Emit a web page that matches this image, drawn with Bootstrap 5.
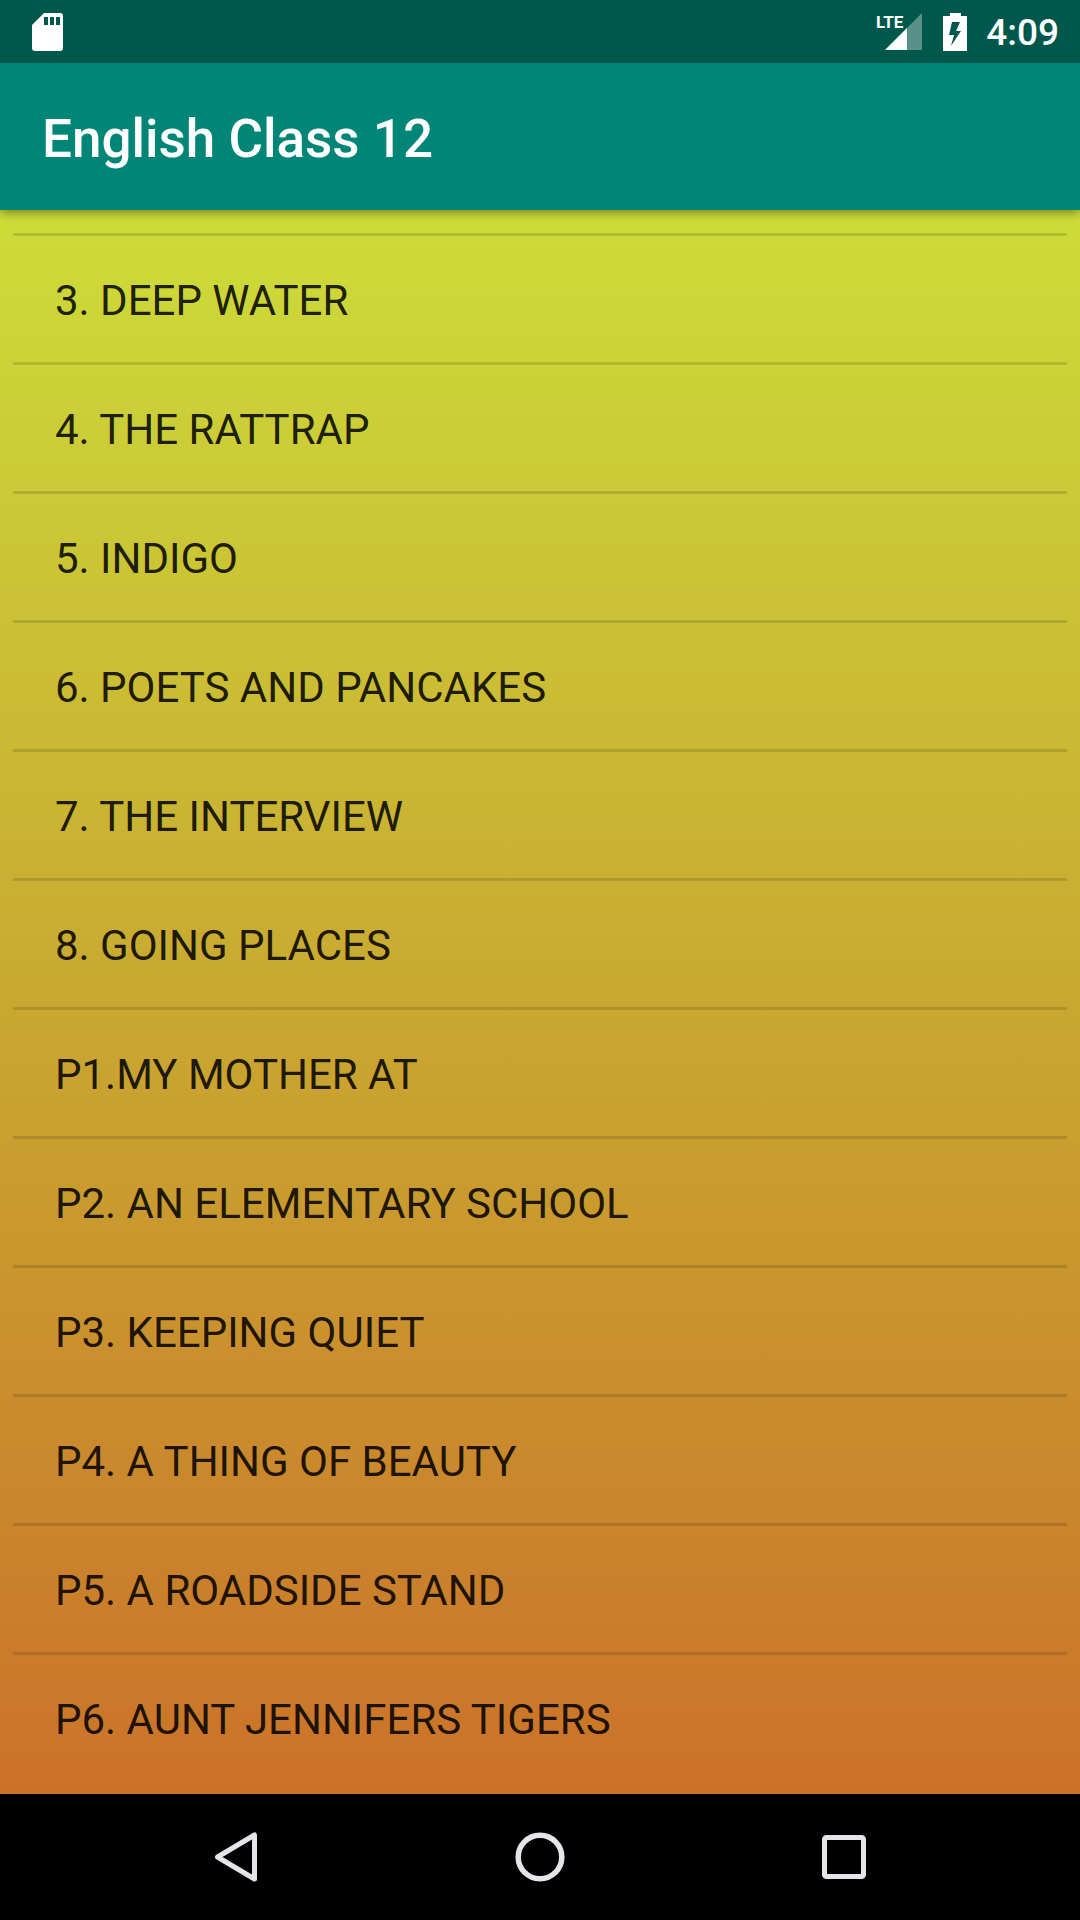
<!DOCTYPE html>
<html lang="en">
<head>
<meta charset="utf-8">
<meta name="viewport" content="width=device-width, initial-scale=1">
<title>English Class 12</title>
<link href="https://cdn.jsdelivr.net/npm/bootstrap@5.3.0/dist/css/bootstrap.min.css" rel="stylesheet">
<style>
  body { font-family: Roboto, "Noto Sans", sans-serif; background: #000; }
  .status-bar { background: #00574b; height: 63px; padding: 0 21px 0 32px; color: #fff; z-index: 2; }
  .network { height: 38px; width: 46px; }
  .network text { font: 700 17px "Liberation Sans Narrow", Roboto, sans-serif; }
  .charge { margin: 0 19px 0 21px; }
  .clock { font-size: 37px; line-height: 44px; font-weight: 500; padding-top: 2px; }
  .app-bar { background: #008577; height: 147px; padding: 4px 42px 0; box-shadow: 0 2px 10px rgba(0,0,0,.45); z-index: 1; }
  .app-title { font-size: 53px; line-height: 60px; font-weight: 500; color: #fff; }
  .chapters { background: linear-gradient(#cddc39, #c9a831 50%, #cb7229); padding: 23px 13px 13px; }
  .chapters .list-group-item { background: transparent; border: 0; border-top: 3px solid rgba(0,0,0,.13); border-radius: 0;
    padding: 40px 42px 36px; font-size: 42px; line-height: 50px; color: rgba(0,0,0,.87); }
  .nav-keys { height: 126px; padding: 0 148px; background: #000; }
  .nav-keys .btn { width: 176px; height: 126px; }
</style>
</head>
<body class="min-vh-100 d-flex flex-column">
<header class="status-bar position-relative d-flex align-items-center justify-content-between">
  <svg width="31" height="38" viewBox="0 0 31 38" aria-label="SD card"><path fill="#fff" fill-rule="evenodd" d="M12 0h16a3 3 0 0 1 3 3v32a3 3 0 0 1-3 3H3a3 3 0 0 1-3-3V12zM12 4v8h4V4zm6 0v8h4V4zm6 0v8h4V4z"/></svg>
  <div class="d-flex align-items-center">
    <svg class="network" viewBox="0 0 46 38" aria-label="LTE signal"><path fill="#fff" fill-opacity=".35" d="M46 0v37H9z"/><path fill="#fff" d="M31 15v22H9z"/><text x="0" y="15" fill="#fff">LTE</text></svg>
    <svg class="charge" width="24" height="38" viewBox="0 0 24 38" aria-label="Battery charging"><path fill="#fff" fill-rule="evenodd" d="M7 0h11v3h6v35H0V3h7zM9 9 6 22h5L8 33l10-15h-5l4-9z"/></svg>
    <span class="clock">4:09</span>
  </div>
</header>
<nav class="app-bar navbar position-relative"><h1 class="app-title m-0">English Class 12</h1></nav>
<main class="chapters flex-grow-1">
  <div class="list-group list-group-flush">
    <a href="#" class="list-group-item">3. DEEP WATER</a>
    <a href="#" class="list-group-item">4. THE RATTRAP</a>
    <a href="#" class="list-group-item">5. INDIGO</a>
    <a href="#" class="list-group-item">6. POETS AND PANCAKES</a>
    <a href="#" class="list-group-item">7. THE INTERVIEW</a>
    <a href="#" class="list-group-item">8. GOING PLACES</a>
    <a href="#" class="list-group-item">P1.MY MOTHER AT</a>
    <a href="#" class="list-group-item">P2. AN ELEMENTARY SCHOOL</a>
    <a href="#" class="list-group-item">P3. KEEPING QUIET</a>
    <a href="#" class="list-group-item">P4. A THING OF BEAUTY</a>
    <a href="#" class="list-group-item">P5. A ROADSIDE STAND</a>
    <a href="#" class="list-group-item">P6. AUNT JENNIFERS TIGERS</a>
  </div>
</main>
<footer class="nav-keys d-flex align-items-center justify-content-between">
  <button class="btn p-0 border-0" aria-label="Back"><svg width="50" height="50" viewBox="0 0 50 50" fill="none" stroke="#e6e4e8" stroke-width="5" stroke-linejoin="round"><path d="M43.500 3v44L6.500 25z"/></svg></button>
  <button class="btn p-0 border-0" aria-label="Home"><svg width="50" height="50" viewBox="0 0 50 50" fill="none" stroke="#e6e4e8" stroke-width="5.500"><circle cx="25" cy="25" r="21.800"/></svg></button>
  <button class="btn p-0 border-0" aria-label="Recent apps"><svg width="44" height="44" viewBox="0 0 44 44" fill="none" stroke="#e6e4e8" stroke-width="5"><rect x="2.500" y="2.500" width="39" height="39" rx="2"/></svg></button>
</footer>
<script src="https://cdn.jsdelivr.net/npm/bootstrap@5.3.0/dist/js/bootstrap.bundle.min.js"></script>
</body>
</html>
